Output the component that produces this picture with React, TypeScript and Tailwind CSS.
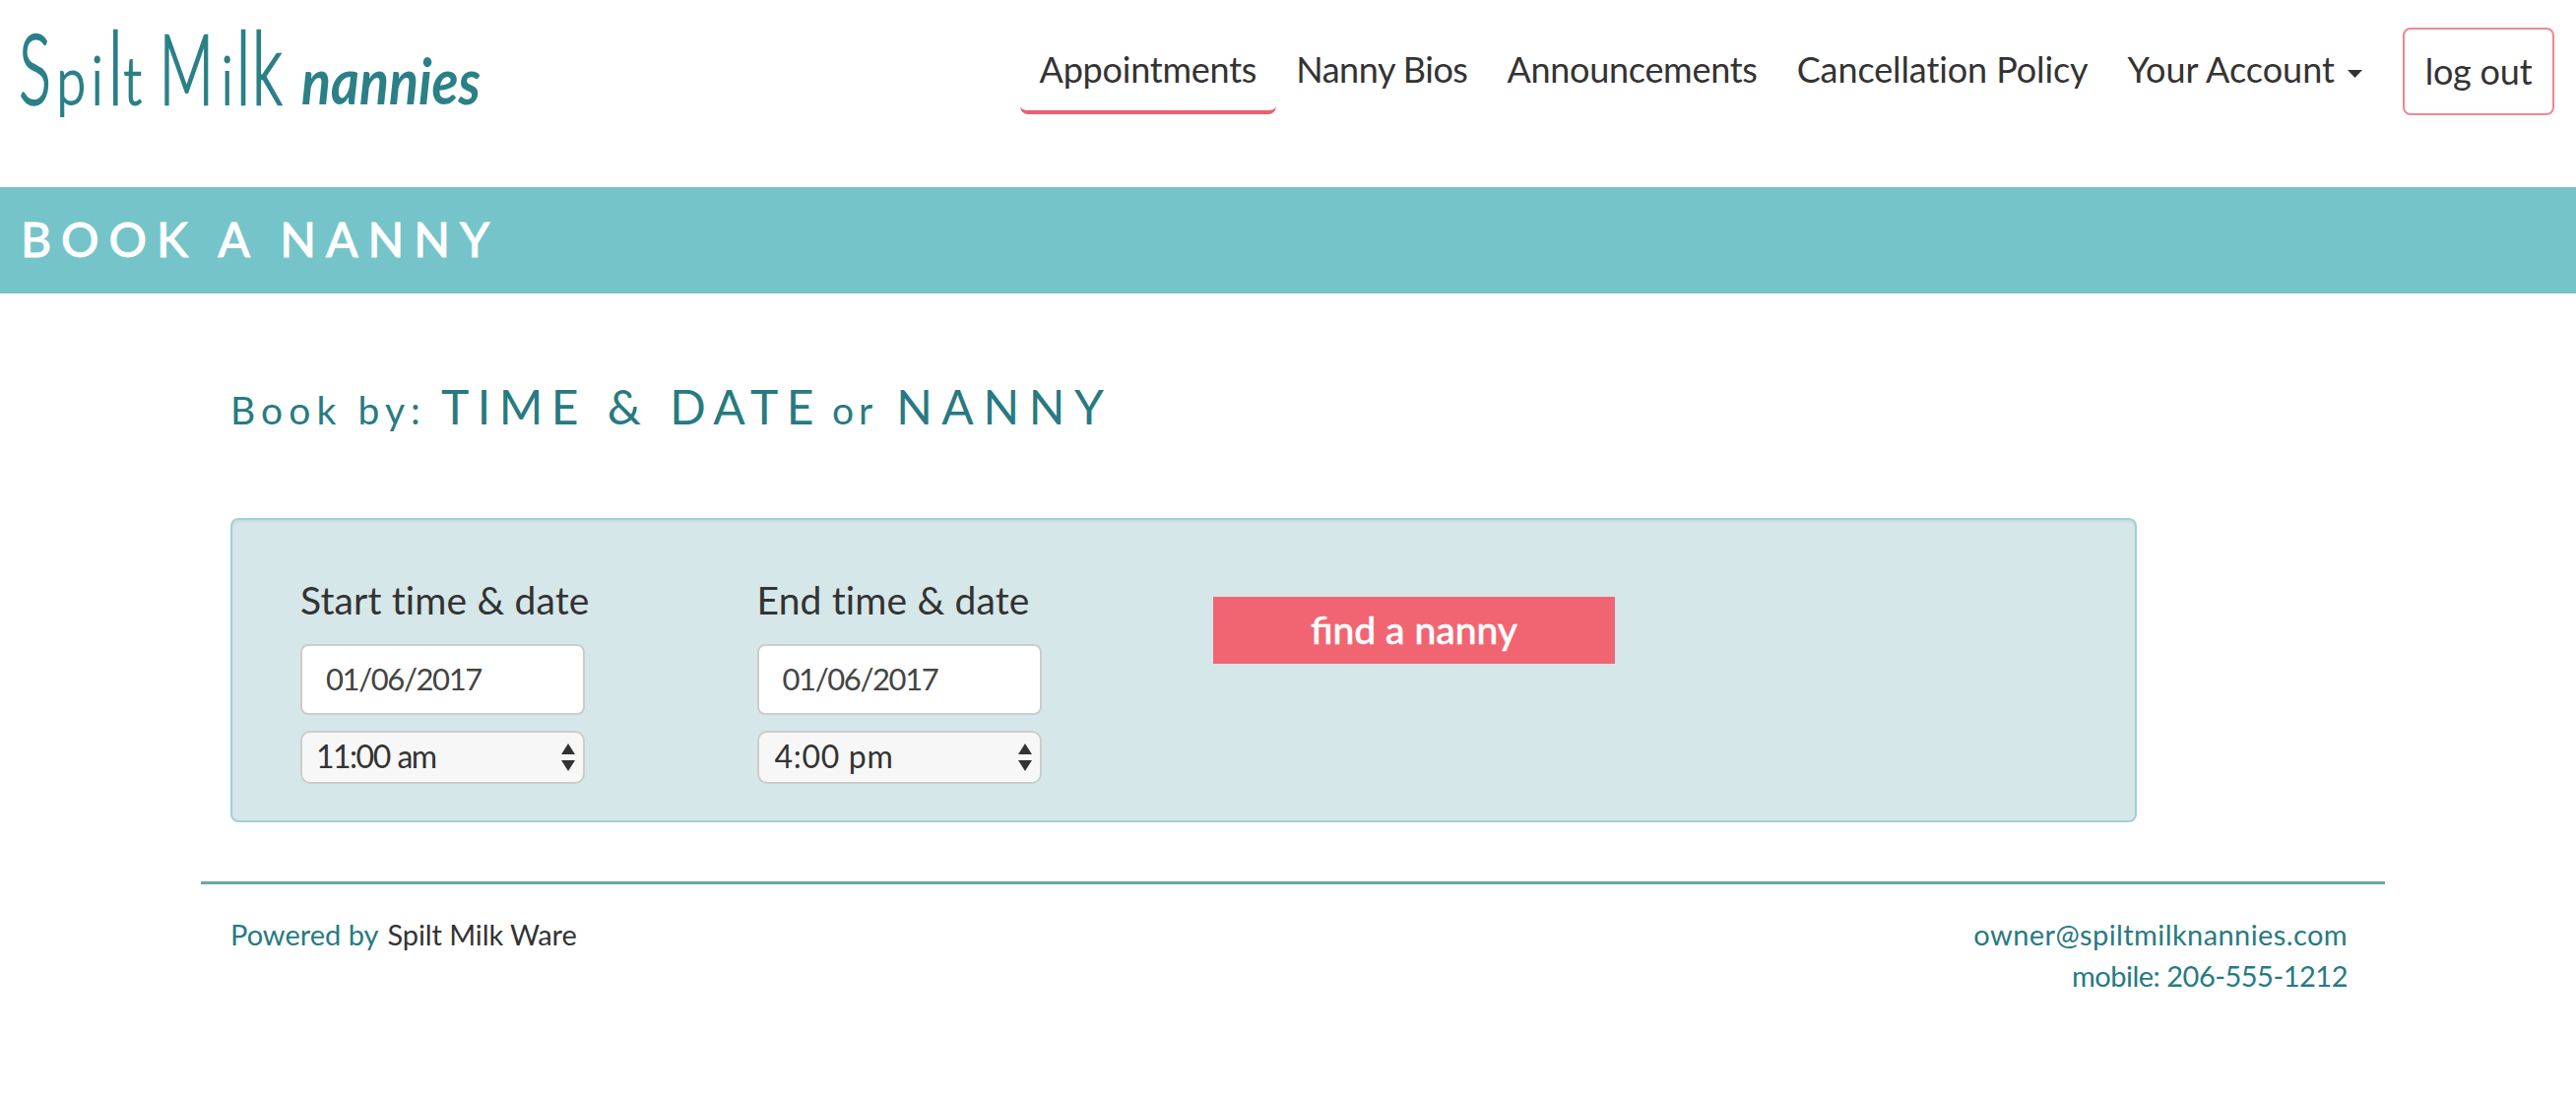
type NavItem = {
  label: string;
  tracking: string;
  active?: boolean;
  dropdown?: boolean;
};

type Field = {
  id: string;
  label: string;
  date: string;
  time: string;
  timeTracking: string;
};

const NAV_ITEMS: NavItem[] = [
  { label: "Appointments", tracking: "tracking-[-0.23px]", active: true },
  { label: "Nanny Bios", tracking: "tracking-[-0.48px]" },
  { label: "Announcements", tracking: "tracking-[-0.28px]" },
  { label: "Cancellation Policy", tracking: "tracking-[-0.1px]" },
  { label: "Your Account", tracking: "tracking-[0.02px]", dropdown: true },
];

const FIELDS: Field[] = [
  {
    id: "start",
    label: "Start time & date",
    date: "01/06/2017",
    time: "11:00 am",
    timeTracking: "tracking-[-1.5px] pl-3.5 [word-spacing:1px]",
  },
  {
    id: "end",
    label: "End time & date",
    date: "01/06/2017",
    time: "4:00 pm",
    timeTracking: "tracking-[0.7px] pl-4",
  },
];

function Logo() {
  return (
    <svg
      className="block h-[150px] w-[520px] overflow-visible"
      viewBox="0 0 520 150"
      fill="#2b8088"
      stroke="#2b8088"
      aria-label="Spilt Milk nannies"
    >
      {/* tall, narrow letters */}
      <g transform="scale(0.62 1)" fontSize="98" fontWeight="300" strokeWidth="2.4">
        <text y="106" x="31">S</text>
        <text y="106" x="178" fontSize="103">l</text>
        <text y="106" x="261">M</text>
        <text y="106" x="387 413" fontSize="103">lk</text>
      </g>
      {/* low letters */}
      <g transform="scale(0.8 1)" fontSize="67" fontWeight="300" strokeWidth="2">
        <text y="106" x="72">p</text>
        <text y="106" x="116">i</text>
        <text y="106" x="157">t</text>
        <text y="106" x="281">i</text>
      </g>
      <text
        x="306"
        y="106"
        fontSize="65"
        fontWeight="700"
        fontStyle="italic"
        stroke="none"
        textLength="182"
        lengthAdjust="spacingAndGlyphs"
      >
        nannies
      </text>
    </svg>
  );
}

function Header() {
  return (
    <header className="flex h-[190px] items-start justify-between pr-[22px]">
      <Logo />
      <nav className="flex items-start pt-7 text-[36px] leading-10">
        {NAV_ITEMS.map((item) => (
          <a
            key={item.label}
            href="#"
            className={`flex items-center rounded-lg border-b-4 px-5 pt-[22px] pb-[22px] whitespace-nowrap ${item.tracking} ${
              item.active ? "border-[#ea6070]" : "border-transparent"
            }`}
          >
            {item.label}
            {item.dropdown && (
              <svg className="mt-2.5 ml-[13px] h-2 w-[15px]" viewBox="0 0 15 8" fill="#333">
                <path d="M0 0h15L7.500 8z" />
              </svg>
            )}
          </a>
        ))}
        <a
          href="#"
          className="ml-[21px] flex h-[89px] w-[154px] items-center justify-center rounded-lg border-2 border-[#ef8792] pb-0.5 tracking-[-0.2px]"
        >
          log out
        </a>
      </nav>
    </header>
  );
}

function TimeField({ field }: { field: Field }) {
  return (
    <div className="w-[463.500px]">
      <label htmlFor={field.id} className="block text-[39px] leading-[44px] tracking-[0.15px]">
        {field.label}
      </label>
      <input
        id={field.id}
        defaultValue={field.date}
        className="mt-[23px] block h-[72px] w-[289px] rounded-lg border-2 border-[#ccc] bg-white pb-0.5 pl-6 text-[31px] tracking-[-1.4px] text-[#444]"
      />
      <div className="relative mt-4 w-[289px]">
        <select
          defaultValue={field.time}
          className={`block h-[54px] w-full appearance-none rounded-[10px] border-2 border-[#ccc] bg-[#f7f7f7] pb-1 text-[32px] ${field.timeTracking}`}
        >
          <option>{field.time}</option>
        </select>
        <svg
          className="pointer-events-none absolute top-[13px] right-2.5 h-[28px] w-[14px]"
          viewBox="0 0 14 28"
          fill="#333"
        >
          <path d="M7 0l7 11H0zM0 17h14L7 28z" />
        </svg>
      </div>
    </div>
  );
}

export default function App() {
  return (
    <div className="min-h-[1118px] bg-white font-['Lato','Liberation_Sans',sans-serif] text-[#333]">
      <Header />

      <div className="flex h-[108px] items-center bg-[#74c4c9] pb-[3px] pl-[21px]">
        <h1 className="text-[48px] leading-[60px] font-medium tracking-[9.9px] text-white [-webkit-text-stroke:0.8px_white]">
          BOOK A NANNY
        </h1>
      </div>

      <main className="ml-[234px] w-[1936px] pt-[85px]">
        <h2 className="flex items-baseline text-[39px] leading-[60px] text-[#277a82]">
          <span className="tracking-[6.1px]">Book by:</span>
          <a href="#" className="ml-[15px] text-[48px] tracking-[8.5px]">
            TIME &amp; DATE
          </a>
          <span className="ml-2.5 tracking-[4.9px]">or</span>
          <a href="#" className="ml-[19px] text-[48px] tracking-[9.6px]">
            NANNY
          </a>
        </h2>

        <form className="mt-[80px] flex h-[309px] rounded-lg border-2 border-[#9fd2d5] bg-[#d6e7e9] pt-[59px] pl-[69px] shadow-[inset_0_2px_2px_rgba(0,0,0,0.05)]">
          {FIELDS.map((field) => (
            <TimeField key={field.id} field={field} />
          ))}
          <button
            type="button"
            className="mt-[19px] h-[68px] w-[408px] bg-[#f16572] pb-0.5 text-[39px] leading-[44px] font-medium text-white [-webkit-text-stroke:0.5px_white]"
          >
            find a nanny
          </button>
        </form>
      </main>

      <footer className="mt-[60px] ml-[204px] flex w-[2218px] justify-between border-t-[3px] border-[#69a6ab] pt-[30px] pr-[38px] pl-[30px] text-[29px] leading-[42px] text-[#277a82]">
        <p className="flex gap-[9px]">
          Powered by
          <a href="#" className="tracking-[-0.1px] text-[#333]">
            Spilt Milk Ware
          </a>
        </p>
        <div className="text-right">
          <p className="tracking-[0.4px]">owner@spiltmilknannies.com</p>
          <p className="tracking-[-0.5px]">mobile: 206-555-1212</p>
        </div>
      </footer>
    </div>
  );
}
